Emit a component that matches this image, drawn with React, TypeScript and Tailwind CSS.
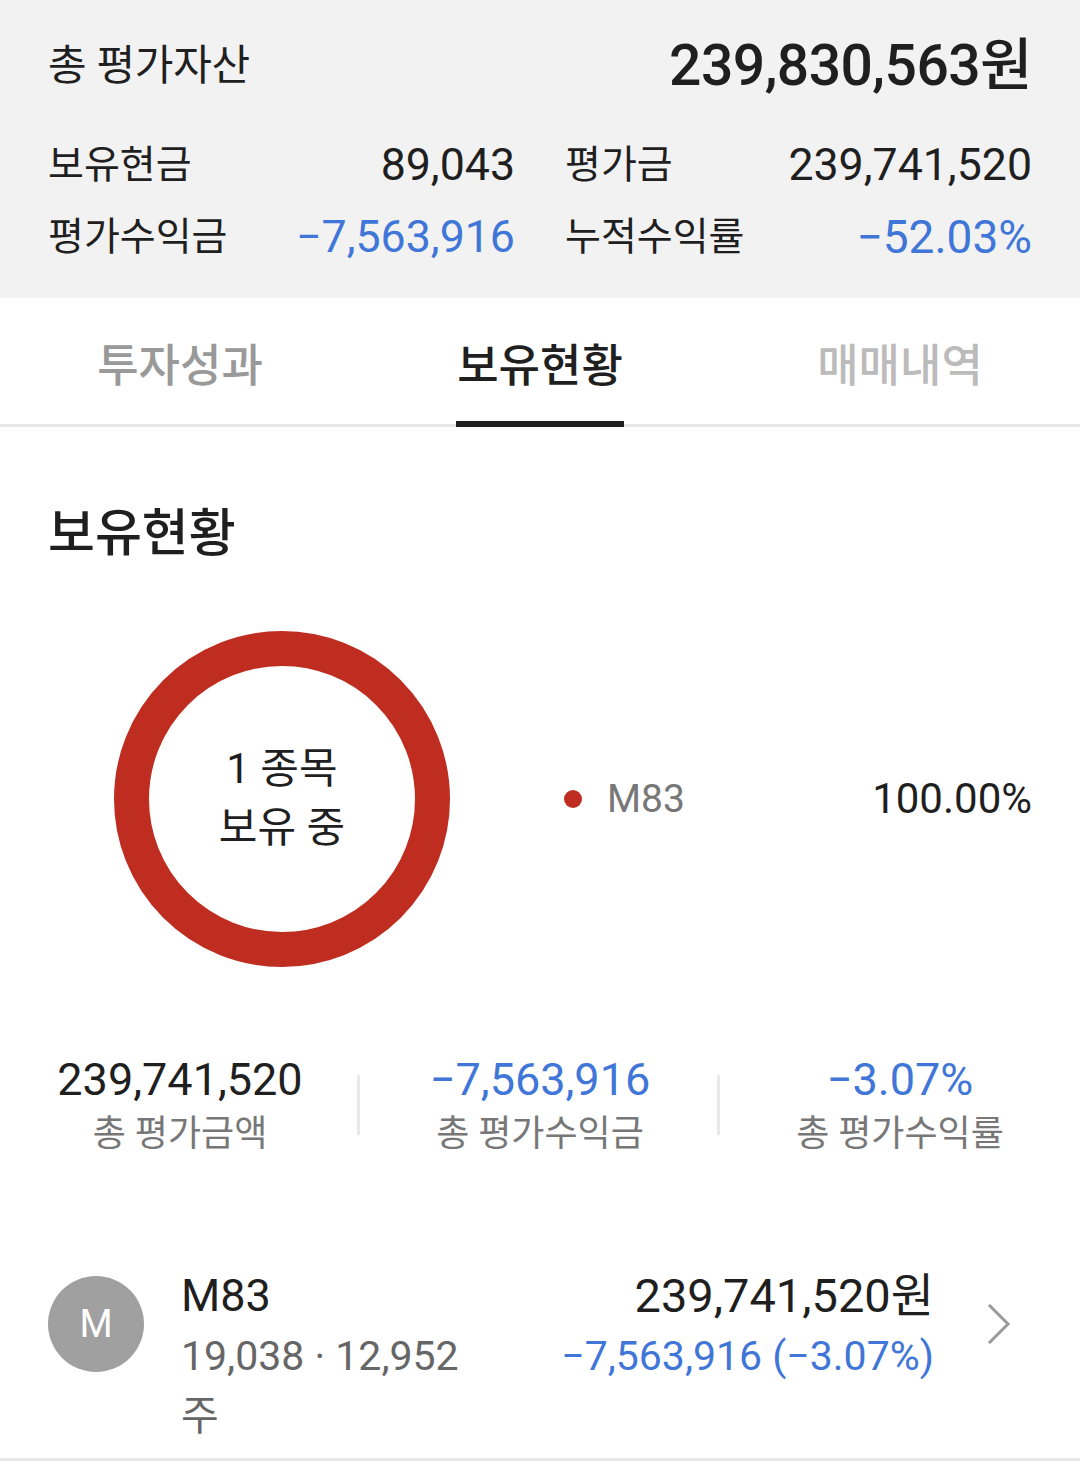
const summary = [
  { label: '총 평가금액', value: '239,741,520', color: 'text-[#1f1f1f]' },
  { label: '총 평가수익금', value: '−7,563,916', color: 'text-[#3f76d8]' },
  { label: '총 평가수익률', value: '−3.07%', color: 'text-[#3f76d8]' },
];

export default function App() {
  return (
    <div className="relative h-[1466px] w-[1080px] overflow-hidden bg-white font-['Roboto','Noto_Sans_CJK_KR',sans-serif] text-[#1f1f1f]">
      <div className="h-[298px] bg-[#f2f2f2] pl-[48px] pr-[48px] pt-[31px]">
        <div className="flex h-[70px] items-center justify-between">
          <span className="text-[42px] leading-[70px] tracking-[-0.3px]">총 평가자산</span>
          <span className="text-[57px] font-medium leading-[70px] tracking-[-0.55px]">239,830,563원</span>
        </div>
        <div className="mt-[35px] grid grid-cols-[467px_1fr] gap-x-[50px] gap-y-[14px] text-[44.7px] leading-[58px]">
          <div className="flex justify-between"><span className="text-[39px]">보유현금</span><span>89,043</span></div>
          <div className="flex justify-between"><span className="text-[39px]">평가금</span><span>239,741,520</span></div>
          <div className="flex justify-between"><span className="text-[39px]">평가수익금</span><span className="text-[#3f76d8]">−7,563,916</span></div>
          <div className="flex justify-between"><span className="text-[39px]">누적수익률</span><span className="text-[46px] text-[#3f76d8]">−52.03%</span></div>
        </div>
      </div>

      <div className="flex h-[129px] border-b-[3px] border-[#e8e8e8] pt-[12px] text-[45px] font-medium">
        <div className="flex flex-1 items-center justify-center text-[#999]">투자성과</div>
        <div className="relative flex flex-1 items-center justify-center">
          보유현황
          <div className="absolute bottom-[-3px] left-[96px] h-[6px] w-[168px] bg-[#1f1f1f]" />
        </div>
        <div className="flex flex-1 items-center justify-center text-[#bbb]">매매내역</div>
      </div>

      <div className="pl-[48px] pt-[72px] text-[51px] font-medium leading-[70px]">보유현황</div>

      <div className="mt-[62px] flex items-center pl-[114px] pr-[48px]">
        <div className="flex h-[336px] w-[336px] flex-col items-center justify-center rounded-full border-[35px] border-[#bf2c20] pb-[2px] text-[42px] leading-[59px]">
          <div>1 종목</div>
          <div>보유 중</div>
        </div>
        <div className="ml-[114px] h-[18px] w-[18px] rounded-full bg-[#bf2c20]" />
        <div className="ml-[25px] text-[39px] text-[#777]">M83</div>
        <div className="ml-auto pb-[2px] text-[42px]">100.00%</div>
      </div>

      <div className="mt-[86px] grid grid-cols-3 text-center">
        {summary.map((s, i) => (
          <div key={s.label} className="relative">
            <div className={`text-[45px] leading-[54px] ${s.color}`}>{s.value}</div>
            <div className="text-[36px] leading-[54px] text-[#777]">{s.label}</div>
            {i < 2 && <div className="absolute right-0 top-[22px] h-[60px] w-[3px] bg-[#e8e8e8]" />}
          </div>
        ))}
      </div>

      <div className="mt-[105px] flex items-start border-b-[3px] border-[#e8e8e8] pb-[12px] pl-[48px] pr-[69px]">
        <div className="mt-[10px] flex h-[96px] w-[96px] shrink-0 items-center justify-center rounded-full bg-[#a0a0a0] text-[38px] text-white">M</div>
        <div className="ml-[37px] w-[290px]">
          <div className="text-[45px] leading-[60px]">M83</div>
          <div className="text-[41px] leading-[60px] text-[#666]">19,038 · 12,952 주</div>
        </div>
        <div className="ml-auto text-right">
          <div className="text-[47px] leading-[60px]">239,741,520원</div>
          <div className="text-[41px] leading-[60px] text-[#3f76d8]">−7,563,916 (−3.07%)</div>
        </div>
        <svg className="ml-[53px] mt-[38px] shrink-0" width="24" height="40" viewBox="0 0 24 40" fill="none" stroke="#999999" strokeWidth="3">
          <path d="M2 1 L21 20 L2 39" />
        </svg>
      </div>
    </div>
  );
}
